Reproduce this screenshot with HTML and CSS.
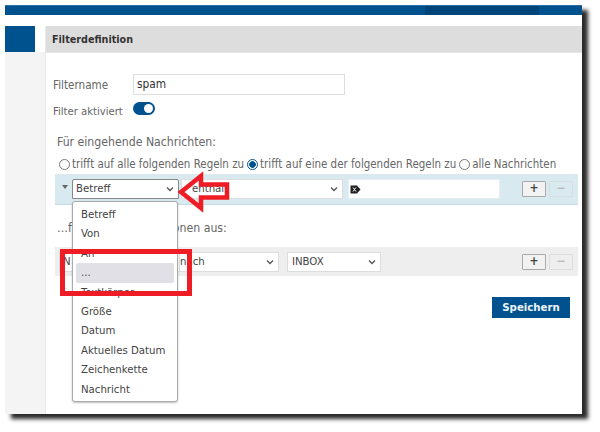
FILE: index.html
```html
<!DOCTYPE html>
<html lang="de">
<head>
<meta charset="utf-8">
<title>Filterdefinition</title>
<link rel="stylesheet" href="styles.css">
</head>
<body>
<div class="shot">
  <div class="topbar"><div class="topbar-active"></div></div>
  <div class="main">
    <aside class="side"><div class="side-active"></div></aside>
    <section class="panel">
      <h2 class="panel-head">Filterdefinition</h2>
      <div class="panel-body">
        <div class="field name-field"><label class="label">Filtername</label><div class="textbox">spam</div></div>
        <div class="field active-field"><label class="label">Filter aktiviert</label><span class="toggle"><span class="knob"></span></span></div>
        <p class="legend legend-in">Für eingehende Nachrichten:</p>
        <div class="radios">
          <span class="radio"></span><span class="radio-text">trifft auf alle folgenden Regeln zu</span>
          <span class="radio on"></span><span class="radio-text">trifft auf eine der folgenden Regeln zu</span>
          <span class="radio"></span><span class="radio-text">alle Nachrichten</span>
        </div>
        <div class="rule">
          <span class="caret"></span>
          <div class="select sel-header">Betreff<svg class="chev" viewBox="0 0 8 6"><path d="M1 1.5 4 4.5 7 1.5"/></svg></div>
          <div class="select sel-op">enthält<svg class="chev" viewBox="0 0 8 6"><path d="M1 1.5 4 4.5 7 1.5"/></svg></div>
          <div class="value"><svg class="tag" viewBox="0 0 11 9"><path d="M0.5 0.5H7L10.5 4.5 7 8.5H0.5Z"/><path class="x" d="M3 2.5 6 6.5M6 2.5 3 6.5"/></svg></div>
          <div class="btns"><span class="btn">+</span><span class="btn off">−</span></div>
        </div>
        <p class="legend legend-out">…führe folgende Aktionen aus:</p>
        <div class="rule action">
          <div class="select sel-action">N</div>
          <div class="select sel-to">nach<svg class="chev" viewBox="0 0 8 6"><path d="M1 1.5 4 4.5 7 1.5"/></svg></div>
          <div class="select sel-box">INBOX<svg class="chev" viewBox="0 0 8 6"><path d="M1 1.5 4 4.5 7 1.5"/></svg></div>
          <div class="btns"><span class="btn">+</span><span class="btn off">−</span></div>
        </div>
        <div class="actions"><button class="save">Speichern</button></div>
      </div>
    </section>
  </div>
  <ul class="menu">
    <li>Betreff</li><li>Von</li><li>An</li><li class="hover">...</li><li>Textkörper</li><li>Größe</li><li>Datum</li><li>Aktuelles Datum</li><li>Zeichenkette</li><li>Nachricht</li>
  </ul>
  <svg class="mark" viewBox="0 0 577 409" width="577" height="409">
    <rect class="mark-box" x="57.5" y="246.5" width="127" height="42"/>
    <path class="mark-line" d="M176 187 196 171V179.5H222V192.5H196V203Z"/>
  </svg>
</div>
</body>
</html>
```
FILE: styles.css
```css
* { box-sizing: border-box; }
html, body { margin: 0; padding: 0; background: #fff; }
body { width: 600px; height: 432px; overflow: hidden; padding: 5px 0 0 5px; font-family: "DejaVu Sans Condensed", "DejaVu Sans", sans-serif; font-size: 11.3px; color: #555; }
.shot { position: relative; width: 577px; height: 409px; background: #fff; box-shadow: 6px 5px 4px #2a2a2a; display: flex; flex-direction: column; }
.topbar { height: 10px; flex: none; background: #00528f; border-top: 1px solid #2a6fa5; padding-left: 420px; }
.topbar-active { width: 114px; height: 9px; background: #00457a; }
.main { flex: 1; display: flex; padding-top: 11px; min-height: 0; }
.side { width: 40px; flex: none; background: linear-gradient(#fff 26px, #f4f4f4 26px); }
.side-active { width: 30px; height: 26px; background: #00528f; }
.panel { flex: 1; min-width: 0; border-left: 1px solid #e8e8e8; display: flex; flex-direction: column; }
.panel-head { margin: 0; height: 27px; line-height: 28px; padding-left: 6px; background: #ddd; border-bottom: 1px solid #e6e6e6; font-size: 10.7px; font-weight: 700; color: #333; }
.panel-body { padding: 21px 4px 0 9px; flex: 1; }
.field { display: flex; align-items: center; }
.label { width: 78px; color: #666; flex: none; margin-left: -2px; margin-right: 2px; font-size: 11.6px; }
.name-field { height: 21px; }
.textbox { width: 212px; height: 21px; border: 1px solid #ddd; padding-left: 3px; line-height: 19px; font-size: 11.8px; color: #333; }
.active-field { height: 16px; margin-top: 8px; font-size: 11px; }
.active-field .label { font-size: 11.2px; }
.toggle { display: block; width: 22px; height: 13px; border-radius: 7px; background: #00528f; padding: 2px 2px 2px 11px; margin-top: -6px; }
.knob { display: block; width: 9px; height: 9px; border-radius: 50%; background: #fff; }
.legend { margin: 0; font-size: 12.2px; color: #666; line-height: 14px; }
.legend-in { margin-top: 16px; padding-left: 2px; }
.radios { display: flex; align-items: center; height: 14px; margin-top: 8px; padding-left: 4px; color: #666; font-size: 11.45px; }
.radio { width: 11px; height: 11px; border: 1.5px solid #777; border-radius: 50%; flex: none; margin-right: 2px; background: #fff; }
.radio.on { border-color: #00528f; background: radial-gradient(circle, #00528f 0 3px, #fff 3.6px); }
.radio-text { margin-right: 3px; white-space: nowrap; }
.rule { display: flex; align-items: center; height: 31px; margin-top: 3px; background: #d9e9f0; border-bottom: 1px solid #c5dbe6; padding-left: 17px; position: relative; }
.caret { position: absolute; left: 7px; top: 11px; width: 0; height: 0; border: 3px solid transparent; border-top: 4px solid #666; }
.select { height: 20px; line-height: 18px; background: #fff; border: 1px solid #ccc; padding-left: 3px; color: #444; display: flex; align-items: center; justify-content: space-between; padding-right: 4px; flex: none; }
.chev { width: 8px; height: 6px; fill: none; stroke: #555; stroke-width: 1.3; }
.sel-header { width: 107px; border-color: #888; border-radius: 2px 2px 0 0; }
.sel-op { width: 162px; margin-left: 2px; border-color: #ddd; padding-left: 10px; }
.value { width: 152px; height: 20px; margin-left: 5px; background: #fff; border: 1px solid #e4eef3; display: flex; align-items: center; padding-left: 1px; }
.tag { width: 11px; height: 9px; }
.tag path { fill: #222; }
.tag .x { fill: none; stroke: #fff; stroke-width: 1; }
.btns { display: flex; gap: 3px; margin-left: auto; margin-right: 5px; }
.btn { width: 24px; height: 16px; line-height: 13px; text-align: center; font-size: 12px; font-weight: 700; color: #444; background: #f2f2f2; border: 1px solid #aaa; border-radius: 1px; }
.btn.off { color: #bbb; background: transparent; border-color: #d5dfe3; }
.legend-out { margin-top: 16px; padding-left: 2px; }
.rule.action { height: 29px; margin-top: 12px; background: #eee; border: 0; padding-left: 4px; }
.action .btn.off { border-color: #ddd; }
.sel-action { width: 121px; border-color: #ddd; }
.sel-to { width: 99px; border-color: #ddd; padding-left: 0; border-left: 0; }
.sel-box { width: 94px; margin-left: 8px; border-color: #ddd; padding-left: 4px; }
.actions { display: flex; justify-content: flex-end; padding: 21px 8px 0 0; }
.save { width: 78px; height: 21px; padding: 0; border: 0; background: #00528f; color: #eef5fa; font: 700 11.3px "DejaVu Sans Condensed", "DejaVu Sans", sans-serif; }
.menu { position: absolute; left: 67px; top: 196px; width: 106px; height: 201px; margin: 0; padding: 3px 3px; list-style: none; background: #fff; border: 1px solid #aaa; border-radius: 3px; box-shadow: 0 1px 2px rgba(0,0,0,.25); color: #444; }
.menu li { height: 19.4px; line-height: 19.4px; padding-left: 5px; border-radius: 2px; white-space: nowrap; }
.menu .hover { background: #e0e0e6; }
.mark { position: absolute; left: 0; top: 0; pointer-events: none; }
.mark-line { fill: none; stroke: #ee1c25; stroke-width: 4.5; }
.mark-box { fill: none; stroke: #ee1c25; stroke-width: 5; }
```
